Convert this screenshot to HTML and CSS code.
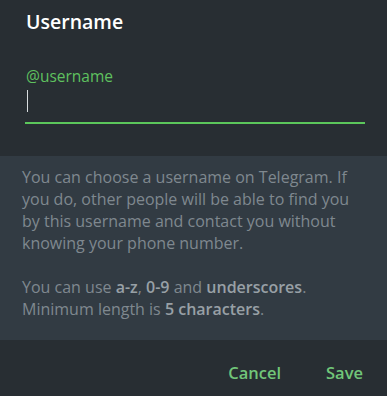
FILE: index.html
```html
<!DOCTYPE html>
<html>
  <head>
    <title>Username</title>
    <link rel="stylesheet" href="styles.css">
  </head>
  <body>
    <div class="box">
      <h1 class="box-title">Username</h1>

      <div class="field">
        <label class="field-label" for="usernameInput">@username</label>
        <div class="field-input">
          <span class="caret"></span>
        </div>
      </div>

      <div class="about">
        <p>You can choose a username on Telegram. If you do, other people will be able to find you by this username and contact you without knowing your phone number.</p>
        <p>You can use <b>a-z</b>, <b>0-9</b> and <b>underscores</b>. Minimum length is <b>5 characters</b>.</p>
      </div>

      <div class="box-buttons">
        <button class="box-button">Cancel</button>
        <button class="box-button">Save</button>
      </div>
    </div>
  </body>
</html>
```

FILE: styles.css
```css
* {
  margin: 0;
  padding: 0;
  box-sizing: border-box;
  font-family: "Open Sans", sans-serif;
}

body {
  width: 387px;
  height: 396px;
  background: #282e33;
  overflow: hidden;
}

.box {
  display: flex;
  flex-direction: column;
  height: 396px;
}

.box-title {
  font-size: 19.5px;
  font-weight: 600;
  color: #ffffff;
  padding: 9px 26px 0;
  line-height: 26px;
}

.field {
  padding: 31px 22px 0 25px;
}

.field-label {
  display: block;
  font-size: 15.5px;
  color: #5fc15f;
  line-height: 20px;
  padding-left: 1px;
}

.field-input {
  height: 38px;
  border-bottom: 2px solid #5bc65b;
  padding: 4px 0 0 2px;
}

.caret {
  display: block;
  width: 1px;
  height: 22px;
  background: #d8dcdf;
}

.about {
  margin-top: 32px;
  background: #323b43;
  padding: 10px 22px 20px;
  height: 184px;
}

.about p {
  font-size: 16px;
  line-height: 22px;
  color: #7f888f;
  margin-bottom: 22px;
}

.about p:last-child {
  margin-bottom: 0;
}

.about b {
  font-weight: 600;
  color: #98a0a6;
}

.box-buttons {
  display: flex;
  justify-content: flex-end;
  gap: 45px;
  padding: 22px 24px 0;
}

.box-button {
  background: transparent;
  border: none;
  font-size: 16.5px;
  font-weight: 600;
  color: #71c679;
  line-height: 22px;
  cursor: pointer;
}
```
